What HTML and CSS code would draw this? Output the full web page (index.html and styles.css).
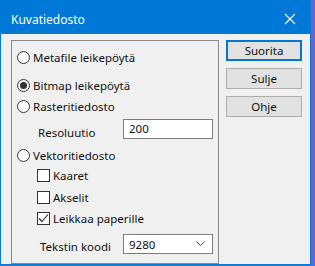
FILE: index.html
```html
<!DOCTYPE html>
<html lang="fi">

<head>
  <meta charset="UTF-8">
  <meta name="viewport" content="width=device-width, initial-scale=1.0">
  <title>Kuvatiedosto</title>
  <link rel="stylesheet" href="styles.css">
</head>

<body>
  <div class="window">
    <div class="titlebar">
      <span class="title">Kuvatiedosto</span>
      <svg class="close" width="12" height="12" viewBox="0 0 12 12">
        <path d="M1 1 L11 11 M11 1 L1 11" stroke="#fff" stroke-width="1.1" fill="none" />
      </svg>
    </div>

    <div class="content">
      <div class="group">
        <div class="row r1">
          <span class="radio"></span>
          <span>Metafile leikepöytä</span>
        </div>
        <div class="row r2">
          <span class="radio checked"></span>
          <span>Bitmap leikepöytä</span>
        </div>
        <div class="row r3">
          <span class="radio"></span>
          <span>Rasteritiedosto</span>
        </div>
        <div class="field r4">
          <span class="label res-label">Resoluutio</span>
          <div class="textbox">200</div>
        </div>
        <div class="row r5">
          <span class="radio"></span>
          <span>Vektoritiedosto</span>
        </div>
        <div class="row sub r6">
          <span class="check"></span>
          <span>Kaaret</span>
        </div>
        <div class="row sub r7">
          <span class="check"></span>
          <span>Akselit</span>
        </div>
        <div class="row sub r8">
          <span class="check">
            <svg width="11" height="11" viewBox="0 0 11 11">
              <path d="M1 5.5 L4 8.5 L10 1.5" stroke="#222" stroke-width="1.1" fill="none" />
            </svg>
          </span>
          <span>Leikkaa paperille</span>
        </div>
        <div class="field r9">
          <span class="label code-label">Tekstin koodi</span>
          <div class="textbox combo">
            <span>9280</span>
            <svg width="9" height="6" viewBox="0 0 9 6">
              <path d="M0.5 0.5 L4.5 4.5 L8.5 0.5" stroke="#444" stroke-width="1" fill="none" />
            </svg>
          </div>
        </div>
      </div>

      <div class="buttons">
        <button class="btn default">Suorita</button>
        <button class="btn">Sulje</button>
        <button class="btn">Ohje</button>
      </div>
    </div>
  </div>
</body>

</html>
```

FILE: styles.css
```css
body {
  margin: 0;
  background: #6b63c9;
  font-family: "Noto Sans", "Liberation Sans", sans-serif;
  font-size: 11.5px;
  color: #111;
}

.window {
  width: 309px;
  height: 264px;
  background: #f0f0f0;
  border: 1px solid #0078d7;
  border-top: none;
}

.titlebar {
  height: 34px;
  background: #0078d7;
  display: flex;
  align-items: center;
  justify-content: space-between;
  padding: 0 10px 0 10px;
}

.title {
  color: #fff;
  font-size: 12px;
  margin-top: 4px;
}

.close {
  margin-top: 4px;
  margin-right: 4px;
}

.content {
  display: flex;
  align-items: flex-start;
  padding: 6px 0 0 10px;
  gap: 7px;
}

.group {
  height: 216px;
  border: 1px solid #8a8a8a;
  padding: 6px 0 0 5px;
  box-sizing: content-box;
  width: 201px;
}

.row {
  display: flex;
  align-items: center;
  height: 20px;
  gap: 3px;
}

.row.sub {
  padding-left: 20px;
}

.r2 { margin-top: 8px; }
.r3 { margin-top: 1px; }
.r4 { margin-top: 3px; }
.r5 { margin-top: 6px; }
.r6 { margin-top: 0; }
.r7 { margin-top: 2px; }
.r8 { margin-top: 1px; }
.r9 { margin-top: 6px; }

.radio {
  width: 13px;
  height: 13px;
  box-sizing: border-box;
  border: 1px solid #333;
  border-radius: 50%;
  background: #fff;
  display: flex;
  align-items: center;
  justify-content: center;
}

.radio.checked::after {
  content: "";
  width: 7px;
  height: 7px;
  border-radius: 50%;
  background: #333;
}

.check {
  width: 13px;
  height: 13px;
  box-sizing: border-box;
  border: 1px solid #333;
  background: #fff;
  display: flex;
  align-items: center;
  justify-content: center;
}

.field {
  display: flex;
  align-items: flex-start;
  height: 20px;
}

.label {
  line-height: 16px;
  margin-top: 6px;
}

.res-label {
  padding-left: 21px;
  width: 85px;
}

.code-label {
  padding-left: 23px;
  width: 83px;
  margin-top: 5px;
}

.textbox {
  width: 90px;
  height: 20px;
  box-sizing: border-box;
  border: 1px solid #7a7a7a;
  background: #fff;
  padding-left: 5px;
  line-height: 17px;
}

.combo {
  display: flex;
  align-items: center;
  justify-content: space-between;
  padding-right: 7px;
}

.buttons {
  display: flex;
  flex-direction: column;
  gap: 7px;
}

.btn {
  width: 76px;
  height: 21px;
  font-family: inherit;
  font-size: 11.5px;
  color: #111;
  background: #e1e1e1;
  border: 1px solid #adadad;
  padding: 0;
}

.btn.default {
  border: 2px solid #0078d7;
}
```
